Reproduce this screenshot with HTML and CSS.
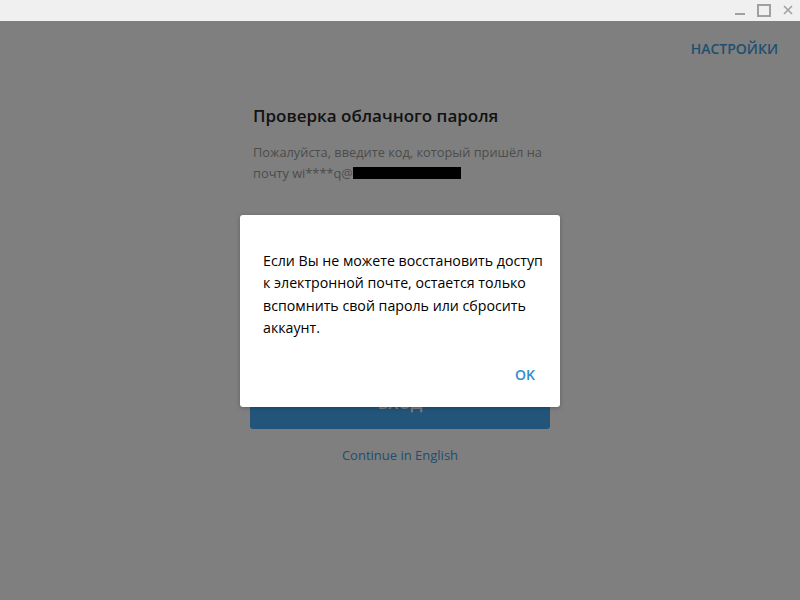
FILE: index.html
```html
<!DOCTYPE html>
<html lang="ru">
<head>
    <meta charset="UTF-8">
    <title>Telegram</title>
    <link rel="stylesheet" href="styles.css">
</head>
<body>
    <!-- заголовок окна -->
    <div class="titlebar">
        <span class="win-btn win-min"></span>
        <span class="win-btn win-max"></span>
        <span class="win-btn win-close">
            <svg width="10" height="10" viewBox="0 0 10 10"><path d="M1 1L9 9M9 1L1 9" stroke="#a0a0a0" stroke-width="1.6" fill="none"/></svg>
        </span>
    </div>

    <div class="main">
        <div class="topbar">
            <a href="#" class="settings">НАСТРОЙКИ</a>
        </div>

        <div class="login">
            <h1>Проверка облачного пароля</h1>
            <p class="hint">Пожалуйста, введите код, который пришёл на почту wi****q@<span class="redacted"></span></p>
            <div class="field">
                <input type="text" placeholder="Код">
            </div>
            <button class="submit">ВХОД</button>
            <a href="#" class="lang">Continue in English</a>
        </div>

        <!-- затемнение и диалог -->
        <div class="overlay">
            <div class="dialog">
                <p>Если Вы не можете восстановить доступ к электронной почте, остается только вспомнить свой пароль или сбросить аккаунт.</p>
                <div class="dialog-actions">
                    <a href="#" class="dialog-ok">OK</a>
                </div>
            </div>
        </div>
    </div>
</body>
</html>
```

FILE: styles.css
```css
* {
    box-sizing: border-box;
    margin: 0;
    padding: 0;
}
body {
    font-family: 'Open Sans', 'Noto Sans', sans-serif;
    background-color: #ffffff;
    color: #222222;
    width: 800px;
    height: 600px;
    overflow: hidden;
}
/* заголовок окна */
.titlebar {
    height: 21px;
    background-color: #f0f0f0;
    display: flex;
    justify-content: flex-end;
    align-items: flex-start;
}
.win-btn {
    width: 24px;
    height: 21px;
    display: flex;
    align-items: center;
    justify-content: center;
}
.win-min::after {
    content: "";
    width: 10px;
    height: 2px;
    background-color: #a0a0a0;
    margin-top: 7px;
}
.win-max::after {
    content: "";
    width: 10px;
    height: 9px;
    border: 2px solid #a0a0a0;
    margin-top: -1px;
}
.win-close svg {
    margin-top: -1px;
}
/* основная область */
.main {
    position: relative;
    height: 579px;
}
.topbar {
    display: flex;
    justify-content: flex-end;
    padding: 18px 22px 0 0;
}
.settings {
    font-size: 14px;
    font-weight: 600;
    color: #3d9fe0;
    text-decoration: none;
}
.login {
    width: 300px;
    margin: 0 auto;
    padding-top: 46px;
    display: flex;
    flex-direction: column;
}
.login h1 {
    font-size: 17px;
    font-weight: 600;
    color: #262626;
    padding-left: 3px;
    line-height: 24px;
}
.hint {
    margin-top: 14px;
    font-size: 12.8px;
    line-height: 21px;
    color: #999999;
    padding-left: 3px;
}
.redacted {
    display: inline-block;
    width: 108px;
    height: 12px;
    background-color: #000000;
    vertical-align: -1px;
}
.field {
    margin-top: 60px;
    border-bottom: 2px solid #40a7e3;
    padding: 6px 3px;
}
.field input {
    border: none;
    outline: none;
    font-family: inherit;
    font-size: 15px;
    width: 100%;
}
.submit {
    margin-top: 104px;
    height: 45px;
    padding-bottom: 8px;
    border: none;
    border-radius: 3px;
    background-color: #44aaf2;
    color: #ffffff;
    font-family: inherit;
    font-size: 16px;
    font-weight: 600;
}
.lang {
    margin-top: 17px;
    align-self: center;
    font-size: 13px;
    color: #3e9ddc;
    text-decoration: none;
}
/* затемнение */
.overlay {
    position: absolute;
    inset: 0;
    background-color: rgba(0, 0, 0, 0.5);
    display: flex;
    align-items: center;
    justify-content: center;
}
.dialog {
    width: 320px;
    height: 192px;
    background-color: #ffffff;
    border-radius: 3px;
    box-shadow: 0 1px 4px rgba(0, 0, 0, 0.25);
    padding: 35px 14px 0 23px;
    display: flex;
    flex-direction: column;
}
.dialog p {
    font-size: 14.2px;
    line-height: 22.5px;
    color: #000000;
}
.dialog-actions {
    margin-top: 25px;
    display: flex;
    justify-content: flex-end;
    padding-right: 11px;
}
.dialog-ok {
    font-size: 14px;
    font-weight: 600;
    color: #2d8fcc;
    text-decoration: none;
}
```
